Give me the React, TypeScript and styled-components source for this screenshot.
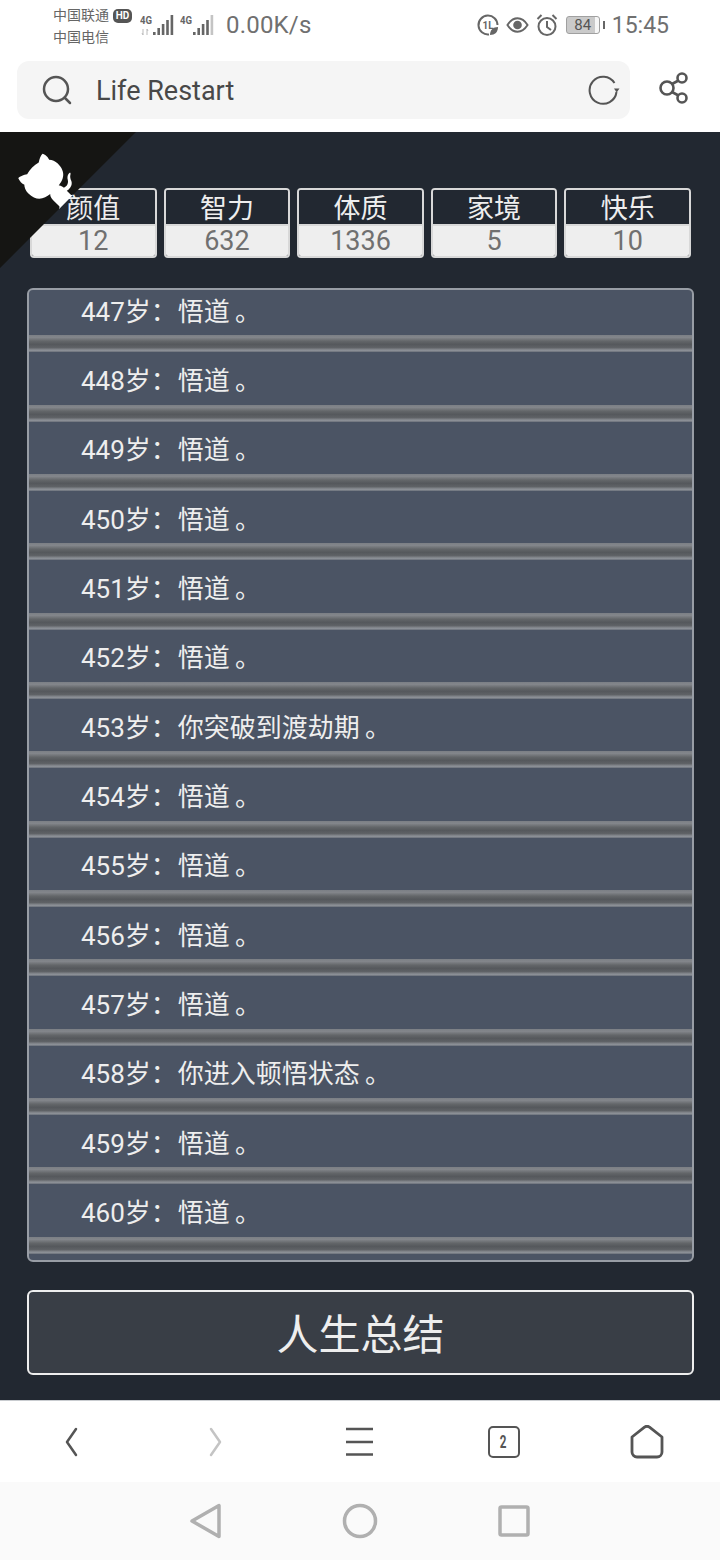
import React from 'react'
import styled, { createGlobalStyle } from 'styled-components'

const GlobalStyle = createGlobalStyle`
  html, body { margin: 0; padding: 0; background: #fff; }
  body { font-family: Roboto, "Noto Sans CJK SC", sans-serif; }
  * { box-sizing: border-box; }
`

const Page = styled.div`
  width: 720px;
  height: 1560px;
  display: flex;
  flex-direction: column;
  overflow: hidden;
`

const StatusBar = styled.div`
  height: 54px;
  display: flex;
  align-items: center;
  padding: 0 51px 4px 53px;
  color: #666;
  background: #fff;
`

const Carriers = styled.div`
  width: 84px;
  font-size: 14px;
  line-height: 22px;
  font-family: "Noto Sans CJK SC", sans-serif;
  white-space: nowrap;
`

const HdBadge = styled.span`
  display: inline-block;
  margin-left: 4px;
  width: 19px;
  height: 14px;
  border-radius: 5px;
  background: #555;
  color: #fff;
  font: 700 10px/14px Roboto, sans-serif;
  text-align: center;
  vertical-align: 1px;
`

const Signals = styled.div`
  display: flex;
  gap: 6px;
  margin-left: 3px;
  margin-top: 2px;
`

const Speed = styled.div`
  margin-left: 12px;
  font-size: 24px;
  letter-spacing: 0.2px;
  color: #707070;
`

const StatusRight = styled.div`
  margin-left: auto;
  display: flex;
  align-items: center;
  gap: 7px;
`

const Battery = styled.div`
  position: relative;
  width: 34px;
  height: 18px;
  border: 1px solid #a0a0a0;
  border-radius: 3px;
  margin-left: 1px;
  background: linear-gradient(90deg, #cacaca 88%, #f6f6f6 88%);
  font-size: 15px;
  line-height: 16px;
  text-align: center;
  color: #555;
  &::after {
    content: '';
    position: absolute;
    right: -6px;
    top: 4px;
    width: 2px;
    height: 8px;
    background: #666;
  }
`

const Clock = styled.div`
  margin-left: 5px;
  font-size: 23px;
  color: #707070;
`

const AddressRow = styled.div`
  height: 78px;
  display: flex;
  align-items: flex-start;
  padding: 7px 30px 0 17px;
  background: #fff;
`

const SearchBox = styled.div`
  width: 614px;
  height: 58px;
  display: flex;
  align-items: center;
  padding: 0 9px 0 25px;
  background: #f5f5f5;
  border-radius: 12px;
`

const Url = styled.div`
  margin-left: 24px;
  padding-top: 2px;
  font-size: 27px;
  color: #484848;
  flex: 1;
`

const ShareBtn = styled.div`
  margin-left: 28px;
  margin-top: 10px;
  display: flex;
`

const Main = styled.div`
  position: relative;
  height: 1268px;
  background: #222831;
  overflow: hidden;
`

const Corner = styled.svg`
  position: absolute;
  top: 0;
  left: 0;
  z-index: 2;
  fill: #151513;
  color: #fff;
  transform: scale(-1, 1);
`

const Props = styled.div`
  display: grid;
  grid-template-columns: repeat(5, 1fr);
  gap: 7px;
  margin-top: 56px;
  padding: 0 29px 0 30px;
`

const Prop = styled.div`
  height: 70px;
  border: 2px solid #d8d8d8;
  border-radius: 4px;
  overflow: hidden;
  display: flex;
  flex-direction: column;
  text-align: center;
`

const PropLabel = styled.div`
  flex: none;
  height: 36px;
  background: #222831;
  color: #eee;
  font: 27px/34px "Noto Sans CJK SC", sans-serif;
  border-bottom: 2px solid #d8d8d8;
`

const PropValue = styled.div`
  flex: 1;
  background: #eeeeee;
  color: #707070;
  font-size: 27px;
  line-height: 31px;
`

const Trajectory = styled.div`
  height: 974px;
  margin: 30px 26px 0 27px;
  border: 2px solid #989da5;
  border-radius: 6px;
  background: #4b5464;
  overflow: hidden;
`

const TrajectoryInner = styled.ul`
  list-style: none;
  margin: -7px 0 0;
  padding: 0;
`

const Row = styled.li`
  height: 69.33px;
  display: flex;
  flex-direction: column;
  color: #eee;
  font-size: 26px;
  &::after {
    content: '';
    height: 17px;
    flex: none;
    background: linear-gradient(180deg, #7b7f85 0%, #83868b 14%, #636669 36%, #55585c 55%, #5f6266 74%, #8f9399 90%, #6a707a 100%);
  }
`

const RowText = styled.div`
  flex: 1;
  display: flex;
  align-items: center;
  padding-left: 52px;
`

const Age = styled.span`
  margin-right: 1px;
`

const Stop = styled.span`
  margin-left: 5px;
`

const SummaryBtn = styled.button`
  display: block;
  width: 667px;
  height: 85px;
  margin: 28px 0 0 27px;
  padding: 0 0 2px;
  border: 2px solid #eee;
  border-radius: 6px;
  background: #393e46;
  color: #eee;
  font: 42px "Noto Sans CJK SC", sans-serif;
`

const BrowserNav = styled.div`
  height: 82px;
  display: grid;
  grid-template-columns: repeat(5, 144px);
  padding-top: 2px;
  border-top: 1px solid #c9ccd0;
  background: #fff;
`

const NavSlot = styled.div`
  display: flex;
  align-items: center;
  justify-content: center;
  padding-bottom: 2px;
`

const TabCount = styled.div`
  width: 32px;
  height: 32px;
  margin-right: 1px;
  border: 2.5px solid #555;
  border-radius: 5px;
  color: #555;
  font: 700 18px/27px Roboto, sans-serif;
  text-align: center;
`

const TabDigit = styled.span`
  display: inline-block;
  transform: scaleX(0.65);
`

const SystemNav = styled.div`
  flex: 1;
  display: flex;
  align-items: center;
  justify-content: center;
  gap: 120px;
  background: #fafafa;
`

const ages: [number, string][] = [
  [447, '悟道'],
  [448, '悟道'],
  [449, '悟道'],
  [450, '悟道'],
  [451, '悟道'],
  [452, '悟道'],
  [453, '你突破到渡劫期'],
  [454, '悟道'],
  [455, '悟道'],
  [456, '悟道'],
  [457, '悟道'],
  [458, '你进入顿悟状态'],
  [459, '悟道'],
  [460, '悟道'],
]

const props: [string, number][] = [
  ['颜值', 12],
  ['智力', 632],
  ['体质', 1336],
  ['家境', 5],
  ['快乐', 10],
]

function SignalIcon({ bars, arrows }: { bars: number; arrows?: boolean }) {
  const heights = [3, 7, 11, 15, 20]
  return (
    <svg width="34" height="24" viewBox="0 0 34 24">
      <text x="0" y="10" fontSize="11" fontWeight="700" fill="#666" fontFamily="Roboto" textLength="12" lengthAdjust="spacingAndGlyphs">4G</text>
      {arrows && <path d="M3 15v6M2 19l1 2M7 15v6M8 17l-1-2" stroke="#bbb" strokeWidth="1" fill="none" />}
      {heights.map((h, i) => (
        <rect key={i} x={13 + i * 4.4} y={21 - h} width="2.6" height={h} fill={i < bars ? '#666' : '#c4c4c4'} />
      ))}
    </svg>
  )
}

export default function App() {
  return (
    <Page>
      <GlobalStyle />
      <StatusBar>
        <Carriers>
          <div>中国联通<HdBadge>HD</HdBadge></div>
          <div>中国电信</div>
        </Carriers>
        <Signals>
          <SignalIcon bars={5} arrows />
          <SignalIcon bars={4} />
        </Signals>
        <Speed>0.00K/s</Speed>
        <StatusRight>
          <svg width="22" height="22" viewBox="0 0 22 22" fill="none" stroke="#666" strokeWidth="2">
            <path d="M12 20.500A9.500 9.500 0 1 1 20.500 11" />
            <text x="5.500" y="15" fontSize="10" fontWeight="700" fill="#666" stroke="none" fontFamily="Roboto">1L</text>
            <path d="M13 21c0-5 3-8 8-8 0 5-3 8-8 8z" fill="#666" stroke="none" />
          </svg>
          <svg width="23" height="18" viewBox="0 0 24 18" fill="none" stroke="#666" strokeWidth="2">
            <path d="M1.500 9C5 3.500 8 2 12 2s7 1.500 10.500 7C19 14.500 16 16 12 16S5 14.500 1.500 9z" />
            <circle cx="12" cy="9" r="4.500" fill="#666" stroke="none" />
          </svg>
          <svg width="22" height="24" viewBox="0 0 22 24" fill="none" stroke="#666" strokeWidth="2">
            <circle cx="11" cy="13.500" r="8.500" />
            <path d="M11 8v6l4 3M1.500 6l4-4M20.500 6l-4-4" />
          </svg>
          <Battery>84</Battery>
          <Clock>15:45</Clock>
        </StatusRight>
      </StatusBar>

      <AddressRow>
        <SearchBox>
          <svg width="30" height="30" viewBox="0 0 30 30" fill="none" stroke="#555" strokeWidth="2.500" strokeLinecap="round">
            <circle cx="14" cy="14" r="12" />
            <path d="M23 23l5 5" />
          </svg>
          <Url>Life Restart</Url>
          <svg width="34" height="32" viewBox="0 0 34 32" fill="none" stroke="#555" strokeWidth="2">
            <path d="M29.500 18A13.500 13.500 0 1 1 27.500 9" />
            <path d="M27 14.500h5.500l-2.800 4z" fill="#555" stroke="none" />
          </svg>
        </SearchBox>
        <ShareBtn>
          <svg width="32" height="34" viewBox="0 0 32 34" fill="none" stroke="#555" strokeWidth="2.600">
            <circle cx="9" cy="17" r="6.500" />
            <circle cx="24" cy="7" r="4.500" />
            <circle cx="24" cy="27" r="4.500" />
            <path d="M14 13l6.500-3.500M14 21l6.500 3.500" />
          </svg>
        </ShareBtn>
      </AddressRow>

      <Main>
        <Corner width="136" height="136" viewBox="0 0 250 250">
          <path d="M0,0 L115,115 L130,115 L142,142 L250,250 L250,0 Z" />
          <path d="M128.3,109.0 C113.8,99.7 119.0,89.6 119.0,89.6 C122.0,82.7 120.5,78.6 120.5,78.6 C119.2,72.0 123.4,76.3 123.4,76.3 C127.3,80.9 125.5,87.3 125.5,87.3 C122.9,97.6 130.6,101.9 134.4,103.2" fill="currentColor" />
          <path d="M115.0,115.0 C114.9,115.1 118.7,116.5 119.8,115.4 L133.7,101.6 C136.9,99.2 139.9,98.4 142.2,98.6 C133.8,88.0 127.5,74.4 143.8,58.0 C148.5,53.4 154.0,51.2 159.7,51.0 C160.3,49.4 163.2,43.6 171.4,40.1 C171.4,40.1 176.1,42.5 178.8,56.2 C183.1,58.6 187.2,61.8 190.9,65.4 C194.5,69.0 197.7,73.2 200.1,77.6 C213.8,80.2 216.3,84.9 216.3,84.9 C212.7,93.1 206.9,96.0 205.4,96.6 C205.1,102.4 203.0,107.8 198.3,112.5 C181.9,128.9 168.3,122.5 157.7,114.1 C157.9,116.9 156.7,120.9 152.7,124.9 L141.0,136.5 C139.8,137.7 141.6,141.9 141.8,141.8 Z" fill="currentColor" />
        </Corner>

        <Props>
          {props.map(([label, value]) => (
            <Prop key={label}>
              <PropLabel>{label}</PropLabel>
              <PropValue>{value}</PropValue>
            </Prop>
          ))}
        </Props>

        <Trajectory>
          <TrajectoryInner>
            {ages.map(([age, text]) => (
              <Row key={age}>
                <RowText>
                  <Age>{age}岁：</Age>{text}<Stop>。</Stop>
                </RowText>
              </Row>
            ))}
          </TrajectoryInner>
        </Trajectory>

        <SummaryBtn>人生总结</SummaryBtn>
      </Main>

      <BrowserNav>
        <NavSlot>
          <svg width="14" height="30" viewBox="0 0 14 30" fill="none" stroke="#555" strokeWidth="2.500" strokeLinecap="round" strokeLinejoin="round">
            <path d="M11 2L2 15l9 13" />
          </svg>
        </NavSlot>
        <NavSlot>
          <svg width="14" height="30" viewBox="0 0 14 30" fill="none" stroke="#c4c4c4" strokeWidth="2.500" strokeLinecap="round" strokeLinejoin="round">
            <path d="M2 2l9 13-9 13" />
          </svg>
        </NavSlot>
        <NavSlot>
          <svg width="28" height="30" viewBox="0 0 28 30" fill="none" stroke="#555" strokeWidth="2.500" style={{ marginRight: 1 }}>
            <path d="M0 2h27M0 15h27M0 27.500h27" />
          </svg>
        </NavSlot>
        <NavSlot>
          <TabCount><TabDigit>2</TabDigit></TabCount>
        </NavSlot>
        <NavSlot>
          <svg width="34" height="34" viewBox="0 0 34 34" fill="none" stroke="#555" strokeWidth="2.800" strokeLinejoin="round" style={{ marginRight: 2 }}>
            <path d="M2 12L14.500 2.200a4 4 0 0 1 5 0L32 12v15a5 5 0 0 1-5 5H7a5 5 0 0 1-5-5z" />
          </svg>
        </NavSlot>
      </BrowserNav>

      <SystemNav>
        <svg width="32" height="36" viewBox="0 0 32 36" fill="none" stroke="#b0b0b0" strokeWidth="3.500" strokeLinejoin="round">
          <path d="M29 2.500v31L2 18z" />
        </svg>
        <svg width="36" height="36" viewBox="0 0 36 36" fill="none" stroke="#b0b0b0" strokeWidth="3.500">
          <circle cx="18" cy="18" r="15.500" />
        </svg>
        <svg width="32" height="32" viewBox="0 0 32 32" fill="none" stroke="#b0b0b0" strokeWidth="3.500" strokeLinejoin="round">
          <rect x="2" y="2" width="28" height="28" rx="1.500" />
        </svg>
      </SystemNav>
    </Page>
  )
}
